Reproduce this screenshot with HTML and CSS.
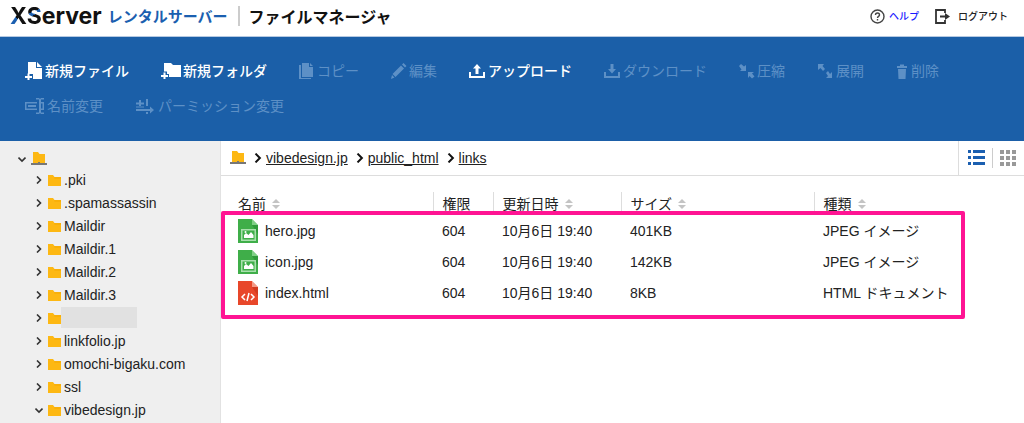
FILE: index.html
```html
<!DOCTYPE html>
<html lang="ja">
<head>
  <meta charset="UTF-8">
  <meta name="viewport" content="width=device-width, initial-scale=1">
  <title>ファイルマネージャ</title>
  <link rel="stylesheet" href="styles.css">
</head>
<body>
  <!-- Shared icons -->
  <svg class="sprite" aria-hidden="true">
    <symbol id="folder" viewBox="0 0 13 12"><path fill="#fdb813" d="M0 1h5l1.500 2H13v9H0z"/><path fill="#f5a800" d="M6 3.500h7v1H6.500z"/></symbol>
    <symbol id="root" viewBox="0 0 16 14"><path fill="#fdb813" d="M2 0h5l1.500 2H14v9H2z"/><path fill="#777" d="M0 11h16v2H0zM7 10h2v1H7z"/></symbol>
    <symbol id="right" viewBox="0 0 8 8"><path fill="none" stroke="currentColor" stroke-width="1.6" d="M2 .5 5.500 4 2 7.500"/></symbol>
    <symbol id="down" viewBox="0 0 8 8"><path fill="none" stroke="currentColor" stroke-width="1.6" d="M.5 2.500 4 6l3.500-3.500"/></symbol>
    <symbol id="sort" viewBox="0 0 8 12"><path fill="#c4c4c4" d="M4 1l4 4H0zM0 7h8l-4 4z"/></symbol>
    <symbol id="image" viewBox="0 0 20 24">
      <path fill="#3fae49" d="M0 0h14l6 6v18H0z"/><path fill="#2f9a3b" d="M20 6v9l-6-9z"/><path fill="#fff" d="M14 0h6v6z"/><path fill="#7fd086" d="M14 0l6 6h-6z"/>
      <path fill="#a9e0ad" d="M3 10h15v12H3z"/><path fill="#3fae49" d="M4.500 11.500h12v9h-12z"/><path fill="#fff" d="M6 19v-3l2-2 2.500 2 2.500-3 2.500 3v3z"/><circle cx="7.500" cy="13" r="1" fill="#fff"/>
    </symbol>
    <symbol id="code" viewBox="0 0 20 24">
      <path fill="#e8472a" d="M0 0h14l6 6v18H0z"/><path fill="#d23a1f" d="M20 6v9l-6-9z"/><path fill="#fff" d="M14 0h6v6z"/><path fill="#f49a86" d="M14 0l6 6h-6z"/>
      <path fill="none" stroke="#fff" stroke-width="1.500" d="M7 13l-3 3 3 3M13 13l3 3-3 3M11 12l-2 8"/>
    </symbol>
  </svg>

  <header class="header">
    <h1 class="brand">
      <span class="logo"><span class="logo-x">X</span><span class="logo-s">S</span>erver</span>
      <span class="service">レンタルサーバー</span>
      <span class="app-name">ファイルマネージャ</span>
    </h1>
    <nav class="account">
      <a class="help" href="#">
        <svg width="15" height="15" viewBox="0 0 15 15"><circle cx="7.500" cy="7.500" r="6.500" fill="none" stroke="#444" stroke-width="1.400"/><path d="M5.500 6c0-2.600 4-2.600 4 0 0 1.300-2 1.400-2 3M7.500 10v1.500" fill="none" stroke="#444" stroke-width="1.400"/></svg>ヘルプ</a>
      <a class="logout" href="#">
        <svg width="15" height="15" viewBox="0 0 15 15"><path d="M10 4V1H1v13h9v-3" fill="none" stroke="#333" stroke-width="1.800"/><path fill="#333" d="M5 6.500h5V4l5 3.500-5 3.500V8.500H5z"/></svg>ログアウト</a>
    </nav>
  </header>

  <div class="toolbar">
    <button type="button">
      <svg width="18" height="18" viewBox="0 0 18 18"><path d="M3 0h8v6h6v11H8v-5H3zM12 0l5 5h-5zM2.500 11.500h2v2.500H7v2H4.500v2h-2v-2H0v-2h2.500z"/></svg>新規ファイル</button>
    <button type="button">
      <svg width="20" height="18" viewBox="0 0 20 18"><path d="M3 1h7l2 2h8v12H8v-3H6V9.500H3zM2.500 10.500h2V13H7v2H4.500v2h-2v-2H0v-2h2.500z"/></svg>新規フォルダ</button>
    <button type="button" disabled>
      <svg width="16" height="18" viewBox="0 0 16 18"><path d="M4 1h6v4h4v10H3V1zM11 1l3 3h-3zM0 3h2v13h10v1H0z"/></svg>コピー</button>
    <button type="button" disabled>
      <svg width="16" height="18" viewBox="0 0 16 18"><path d="M10 3.500l3 3-8.500 8.500-3-3zM1 13l2.500 2.500L0 17zM11 2.500l1.500-1.500 3 3L14 5.500z"/></svg>編集</button>
    <button type="button">
      <svg width="17" height="18" viewBox="0 0 17 18"><path d="M8 2l4 4.500H9.500V12h-3V6.500H4zM0 10h2v4h12v-4h2v6H0z"/></svg>アップロード</button>
    <button type="button" disabled>
      <svg width="17" height="18" viewBox="0 0 17 18"><path d="M6.500 2h3v5H12l-4 4.500L4 7h2.500zM0 10h2v4h12v-4h2v6H0z"/></svg>ダウンロード</button>
    <button type="button" disabled>
      <svg width="16" height="18" viewBox="0 0 16 18"><path d="M2 2l3 2.500L7 3v6H1l1.500-1.500L0 4zM13 16.500l-2.500-2.500L9 16v-6h6l-2 1.500 2.500 3z"/></svg>圧縮</button>
    <button type="button" disabled>
      <svg width="17" height="18" viewBox="0 0 17 18"><path d="M1 2h6L5.500 4 8 7 6 9 3.500 6 1 8zM15 16H9l2-2-2-3 2-2 2 3 2-2z"/></svg>展開</button>
    <button type="button" disabled>
      <svg width="13" height="18" viewBox="0 0 13 18"><path d="M1 4h3V2.500h4V4h3v2H1zM2 7h8l-.5 10h-7z"/></svg>削除</button>
    <button type="button" disabled>
      <svg width="20" height="18" viewBox="0 0 20 18"><path d="M0 5h12v1.500H1.500v5H12V13H0zM3 8h8v2H3zM11 1h3l1 1 1-1h3v1.500h-3V5h3v8h-3v2.500h3V17h-3l-1-1-1 1h-3v-1.500h3v-13h-3zM16 6.500v5h1.500v-5z"/></svg>名前変更</button>
    <button type="button" disabled>
      <svg width="21" height="18" viewBox="0 0 21 18"><path d="M4 3h2v2.500h3v2H6V9H4V7.500H1v-2h3zM1 9.500h8v1H1zM11 2h2v7h-2zM1 12h14V9.500l4 3.500-4 3.500V14H1zM11 15h2v2h-2z"/></svg>パーミッション変更</button>
  </div>

  <div class="content">
    <nav class="tree">
      <a class="tree-root" href="#" aria-label="ルート"><svg class="chevron"><use href="#down"/></svg><svg class="root-icon"><use href="#root"/></svg></a>
      <ul>
        <li><a href="#"><svg class="chevron"><use href="#right"/></svg><svg class="folder"><use href="#folder"/></svg>.pki</a></li>
        <li><a href="#"><svg class="chevron"><use href="#right"/></svg><svg class="folder"><use href="#folder"/></svg>.spamassassin</a></li>
        <li><a href="#"><svg class="chevron"><use href="#right"/></svg><svg class="folder"><use href="#folder"/></svg>Maildir</a></li>
        <li><a href="#"><svg class="chevron"><use href="#right"/></svg><svg class="folder"><use href="#folder"/></svg>Maildir.1</a></li>
        <li><a href="#"><svg class="chevron"><use href="#right"/></svg><svg class="folder"><use href="#folder"/></svg>Maildir.2</a></li>
        <li><a href="#"><svg class="chevron"><use href="#right"/></svg><svg class="folder"><use href="#folder"/></svg>Maildir.3</a></li>
        <li><a class="masked" href="#" aria-label="非表示"><svg class="chevron"><use href="#right"/></svg><svg class="folder"><use href="#folder"/></svg><span class="mask"></span></a></li>
        <li><a href="#"><svg class="chevron"><use href="#right"/></svg><svg class="folder"><use href="#folder"/></svg>linkfolio.jp</a></li>
        <li><a href="#"><svg class="chevron"><use href="#right"/></svg><svg class="folder"><use href="#folder"/></svg>omochi-bigaku.com</a></li>
        <li><a href="#"><svg class="chevron"><use href="#right"/></svg><svg class="folder"><use href="#folder"/></svg>ssl</a></li>
        <li><a href="#"><svg class="chevron"><use href="#down"/></svg><svg class="folder"><use href="#folder"/></svg>vibedesign.jp</a></li>
      </ul>
    </nav>

    <main class="main">
      <div class="path-bar">
        <div class="path">
          <svg class="root-icon"><use href="#root"/></svg>
          <svg class="arrow"><use href="#right"/></svg><a href="#">vibedesign.jp</a>
          <svg class="arrow"><use href="#right"/></svg><a href="#">public_html</a>
          <svg class="arrow"><use href="#right"/></svg><a href="#">links</a>
        </div>
        <div class="views">
          <button type="button" class="view-list" aria-label="リスト表示">
            <svg width="17" height="16" viewBox="0 0 17 16"><path fill="#1b5fb0" d="M0 0h3v3H0zM5 0h12v3H5zM0 6h3v3H0zM5 6h12v3H5zM0 12h3v3H0zM5 12h12v3H5z"/></svg>
          </button>
          <button type="button" class="view-grid" aria-label="アイコン表示">
            <svg width="16" height="16" viewBox="0 0 16 16"><path fill="#999" d="M0 0h4v4H0zM6 0h4v4H6zM12 0h4v4h-4zM0 6h4v4H0zM6 6h4v4H6zM12 6h4v4h-4zM0 12h4v4H0zM6 12h4v4H6zM12 12h4v4h-4z"/></svg>
          </button>
        </div>
      </div>

      <div class="files">
        <table>
          <thead>
            <tr>
              <th class="col-name"><button type="button">名前<svg class="sort"><use href="#sort"/></svg></button></th>
              <th class="col-mode"><span>権限</span></th>
              <th class="col-date"><button type="button">更新日時<svg class="sort"><use href="#sort"/></svg></button></th>
              <th class="col-size"><button type="button">サイズ<svg class="sort"><use href="#sort"/></svg></button></th>
              <th><button type="button">種類<svg class="sort"><use href="#sort"/></svg></button></th>
            </tr>
          </thead>
          <tbody>
            <tr>
              <td><a href="#"><svg class="file-icon"><use href="#image"/></svg>hero.jpg</a></td>
              <td>604</td>
              <td>10月6日 19:40</td>
              <td>401KB</td>
              <td>JPEG イメージ</td>
            </tr>
            <tr>
              <td><a href="#"><svg class="file-icon"><use href="#image"/></svg>icon.jpg</a></td>
              <td>604</td>
              <td>10月6日 19:40</td>
              <td>142KB</td>
              <td>JPEG イメージ</td>
            </tr>
            <tr>
              <td><a href="#"><svg class="file-icon"><use href="#code"/></svg>index.html</a></td>
              <td>604</td>
              <td>10月6日 19:40</td>
              <td>8KB</td>
              <td>HTML ドキュメント</td>
            </tr>
          </tbody>
        </table>
        <div class="highlight"></div>
      </div>
    </main>
  </div>
</body>
</html>
```
FILE: styles.css
```css
* {
  box-sizing: border-box;
}

body {
  margin: 0;
  min-height: 100vh;
  display: flex;
  flex-direction: column;
  font-family: "Liberation Sans", "Noto Sans CJK JP", sans-serif;
  font-size: 14px;
  line-height: 20px;
  color: #222;
  background: #fff;
}

a {
  color: inherit;
  text-decoration: none;
}

button {
  padding: 0;
  border: none;
  background: none;
  font: inherit;
  color: inherit;
  cursor: pointer;
}

svg {
  flex: none;
}

.sprite {
  display: none;
}

/* Header */
.header {
  display: flex;
  justify-content: space-between;
  align-items: center;
  height: 37px;
  padding: 0 16px 4px 10px;
  border-bottom: 1px solid #b5c9e2;
}

.brand {
  display: flex;
  align-items: center;
  margin: 0;
  font-family: "Noto Sans CJK JP", sans-serif;
  font-weight: bold;
  color: #111;
}

.logo {
  font-family: Inter, "Noto Sans", sans-serif;
  font-size: 23px;
}

.logo-x,
.logo-s {
  color: transparent;
  background-clip: text;
  -webkit-background-clip: text;
}

.logo-x {
  background-image: linear-gradient(45deg, #1b5fb0 42%, #111 42%);
}

.logo-s {
  background-image: linear-gradient(155deg, #111 36%, #1b5fb0 36%, #1b5fb0 46%, #111 46%);
}

.service {
  margin-left: 6px;
  font-size: 15px;
  color: #1b5fb0;
}

.app-name {
  margin-left: 10px;
  padding-left: 9px;
  border-left: 2px solid #ccc;
  font-size: 16px;
}

.account {
  display: flex;
  gap: 16px;
  font-family: "Noto Sans CJK JP", sans-serif;
  font-size: 10px;
  font-weight: 500;
}

.account a {
  display: flex;
  align-items: center;
  gap: 4px;
}

.account .logout {
  gap: 8px;
}

.help {
  color: #1a1aff;
}

/* Toolbar */
.toolbar {
  display: flex;
  flex-wrap: wrap;
  gap: 13px 32px;
  padding: 23px 25px 24px;
  background: #1b5fa8;
  color: #fff;
}

.toolbar button {
  display: flex;
  align-items: center;
  gap: 2px;
  height: 22px;
  font-weight: 500;
}

.toolbar button:disabled {
  color: #5d90c6;
  font-weight: normal;
  cursor: default;
}

.toolbar svg {
  fill: currentColor;
}

.content {
  flex: 1;
  display: flex;
}

/* Folder tree */
.tree {
  flex: none;
  width: 221px;
  padding-top: 8px;
  background: #efefef;
  border-right: 1px solid #e2e2e2;
}

.tree ul {
  margin: 0;
  padding: 0 0 0 35px;
  list-style: none;
}

.tree a {
  display: flex;
  align-items: center;
  height: 23px;
}

.tree .tree-root {
  height: 19px;
  padding-left: 18px;
}

.chevron {
  width: 8px;
  height: 8px;
  margin-right: 5px;
  color: #333;
}

.folder {
  width: 13px;
  height: 12px;
  margin-right: 3px;
}

.root-icon {
  width: 16px;
  height: 14px;
}

.masked .folder {
  margin-right: 0;
}

.mask {
  width: 76px;
  height: 21px;
  background: #e1e1e1;
}

/* File list */
.main {
  flex: 1;
  min-width: 0;
}

.path-bar {
  display: flex;
  justify-content: space-between;
  height: 35px;
  border-bottom: 1px solid #ddd;
}

.path {
  display: flex;
  align-items: center;
  padding-left: 9px;
}

.path a {
  text-decoration: underline;
}

.arrow {
  width: 10px;
  height: 10px;
  margin: 0 3px 0 7px;
  color: #111;
}

.views {
  display: flex;
  align-items: center;
  padding: 0 8px 0 9px;
  border-left: 1px solid #ddd;
}

.views button {
  display: flex;
  height: 20px;
  align-items: center;
}

.view-list {
  padding-right: 7px;
}

.views .view-grid {
  padding-left: 7px;
  border-left: 1px solid #ccc;
}

.files {
  position: relative;
  padding-top: 16px;
}

table {
  width: 100%;
  table-layout: fixed;
  border-collapse: collapse;
}

th,
td {
  padding: 0 0 0 9px;
  text-align: left;
  font-weight: normal;
  white-space: nowrap;
}

th {
  height: 23px;
  border-left: 1px solid #ddd;
}

th:first-child {
  border-left: none;
}

th:first-child,
td:first-child {
  padding-left: 17px;
}

th button {
  display: flex;
  align-items: center;
  gap: 6px;
}

td {
  height: 31px;
}

td a {
  display: flex;
  align-items: center;
  gap: 7px;
}

.col-name {
  width: 212px;
}

.col-mode {
  width: 60px;
}

.col-date {
  width: 128px;
}

.col-size {
  width: 193px;
}

.sort {
  width: 8px;
  height: 12px;
}

.file-icon {
  width: 20px;
  height: 24px;
}

/* Frame over the file rows */
.highlight {
  position: absolute;
  top: 35px;
  left: 0;
  right: 59px;
  bottom: -11px;
  border: 4px solid #ff1493;
  border-radius: 2px;
  pointer-events: none;
}
```
